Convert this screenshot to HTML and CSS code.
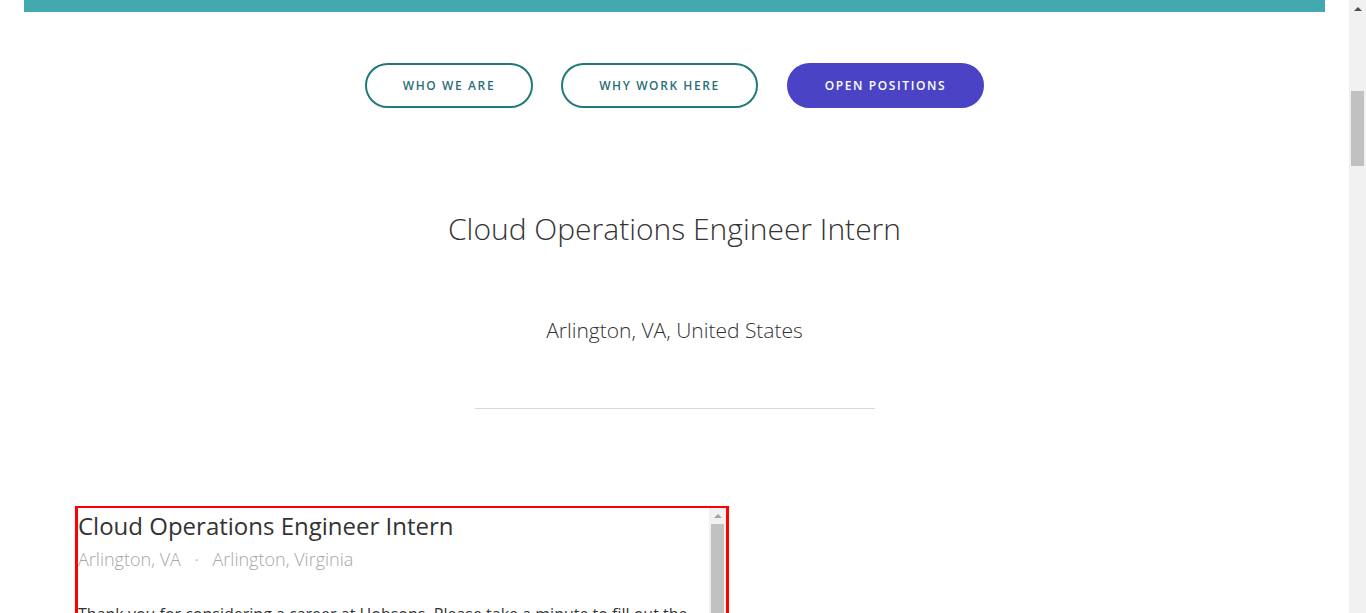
FILE: index.html
```html
<!DOCTYPE html>
<html>
<head>
<meta charset="utf-8">
<link rel="stylesheet" href="styles.css">
</head>
<body>
<div class="page">
  <main class="main">
    <div class="topbar"></div>
    <nav class="tabs">
      <a class="tab">WHO WE ARE</a>
      <a class="tab wide">WHY WORK HERE</a>
      <a class="tab wide active">OPEN POSITIONS</a>
    </nav>
    <h1 class="job-title">Cloud Operations Engineer Intern</h1>
    <p class="job-loc">Arlington, VA, United States</p>
    <hr class="divider">
    <section class="frame">
      <div class="frame-content">
        <h2 class="f-title">Cloud Operations Engineer Intern</h2>
        <p class="f-sub">Arlington, VA <span class="dot">·</span> Arlington, Virginia</p>
        <p class="f-body">Thank you for considering a career at Hobsons. Please take a minute to fill out the</p>
      </div>
      <div class="f-scroll">
        <div class="f-arrow"></div>
        <div class="f-thumb"></div>
      </div>
    </section>
  </main>
  <aside class="scrollbar">
    <div class="sb-arrow"></div>
    <div class="sb-thumb"></div>
  </aside>
</div>
</body>
</html>
```
FILE: styles.css
```css
* { box-sizing: border-box; }
html, body { margin: 0; padding: 0; height: 613px; overflow: hidden; background: #fff; }
body { font-family: "Open Sans", "Liberation Sans", sans-serif; color: #333; }
.page { display: flex; height: 613px; }
.main { width: 1349px; display: flex; flex-direction: column; align-items: center; }
.main > * { flex-shrink: 0; }
.topbar { align-self: stretch; margin: 0 24px; height: 12px; background: #42a9ae; }
.tabs { display: flex; gap: 28px; margin-top: 51px; }
.tab {
  width: 168px; height: 45px; border: 2px solid #1f7a78; border-radius: 23px;
  display: flex; align-items: center; justify-content: center;
  font-size: 12px; font-weight: 600; letter-spacing: 1.6px; color: #2b6f78;
}
.tab.wide { width: 197px; }
.tab.active { background: #4b43c5; border-color: #4b43c5; color: #fff; margin-left: 1px; }
.job-title { margin: 101px 0 0; font-size: 30px; font-weight: 300; line-height: 40px; color: #333; }
.job-loc { margin: 67px 0 0; font-size: 21px; font-weight: 300; line-height: 28px; color: #333; }
.divider { width: 400px; border: 0; border-top: 1px solid #d8d8d8; margin: 64px 0 0; }
.frame {
  align-self: flex-start; margin: 97px 0 0 75px; width: 654px; height: 120px;
  border: 2px solid #f00; border-left-width: 3px; border-right-width: 3px; border-bottom: 0;
  display: flex; overflow: hidden;
}
.frame-content { flex: 1; overflow: hidden; }
.f-title { margin: 2px 0 0; font-size: 24px; font-weight: 400; line-height: 32px; color: #333; }
.f-sub { margin: 0; font-size: 18px; font-weight: 300; line-height: 34px; color: #a6a6a6; white-space: pre; }
.f-sub .dot { margin: 0 9px; }
.f-body { margin: 26px 0 0; font-size: 16px; line-height: 24px; color: #333; white-space: nowrap; }
.f-scroll { width: 17px; background: #f1f1f1; display: flex; flex-direction: column; align-items: center; }
.f-arrow { margin-top: 6px; width: 0; height: 0; border-left: 4px solid transparent; border-right: 4px solid transparent; border-bottom: 4px solid #a3a3a3; }
.f-thumb { margin-top: 6px; width: 13px; flex: 1; background: #c1c1c1; }
.scrollbar { width: 17px; background: #f1f1f1; display: flex; flex-direction: column; align-items: center; }
.sb-arrow { margin-top: 7px; width: 0; height: 0; border-left: 4px solid transparent; border-right: 4px solid transparent; border-bottom: 4px solid #505050; }
.sb-thumb { margin-top: 80px; width: 13px; height: 75px; background: #c1c1c1; }
```
